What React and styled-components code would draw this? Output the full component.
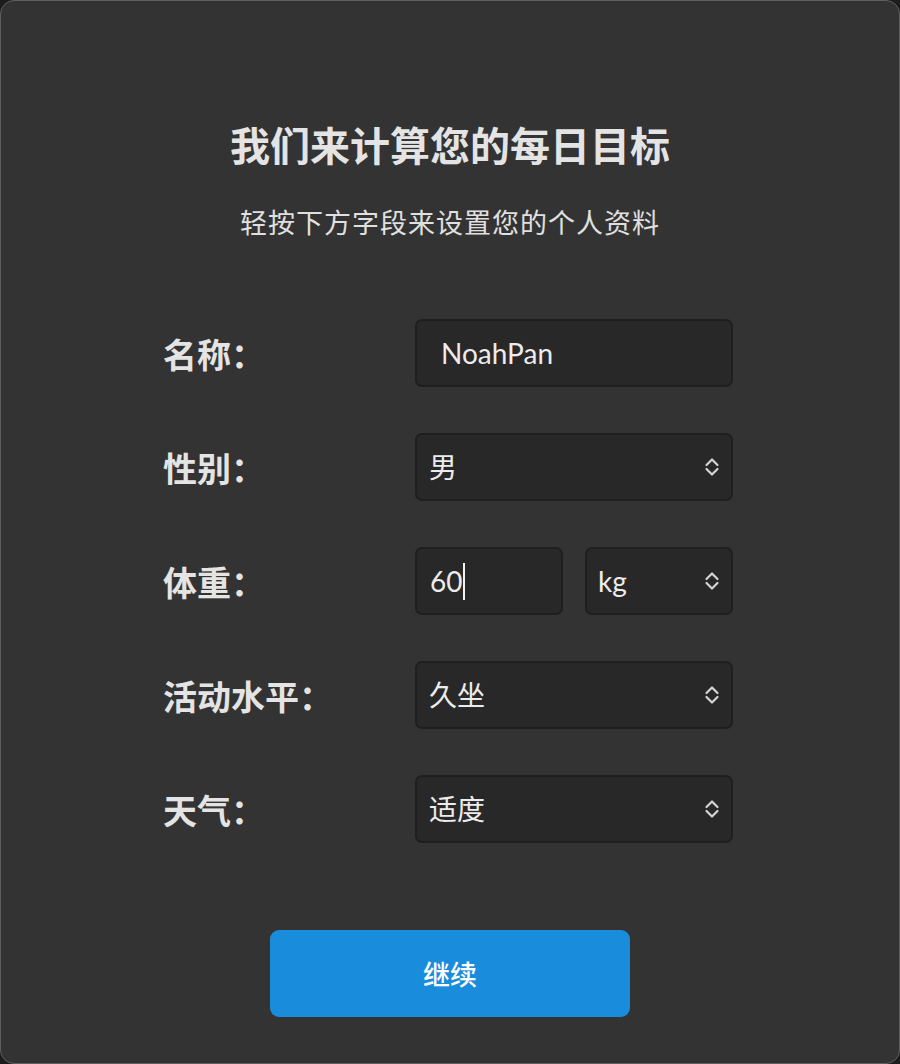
import styled, { createGlobalStyle } from "styled-components";

const GlobalStyle = createGlobalStyle`
  html, body {
    margin: 0;
    padding: 0;
    background: #1c1c1c;
  }
  * { box-sizing: border-box; }
`;

const cjk = `"Noto Sans CJK SC", sans-serif`;
const latin = `Lato, "Noto Sans CJK SC", sans-serif`;

const ChevronUpDown = () => (
    <svg width="16" height="24" viewBox="0 0 16 24" fill="none">
        <path d="M2.5 10 L8 4.5 L13.5 10" stroke="#d4d4d4" strokeWidth="2.2" strokeLinecap="round" strokeLinejoin="round" />
        <path d="M2.5 14 L8 19.5 L13.5 14" stroke="#d4d4d4" strokeWidth="2.2" strokeLinecap="round" strokeLinejoin="round" />
    </svg>
);

const fields = [
    { label: "名称：", kind: "text", value: "NoahPan" },
    { label: "性别：", kind: "select", value: "男" },
    { label: "体重：", kind: "weight", value: "60", unit: "kg" },
    { label: "活动水平：", kind: "select", value: "久坐" },
    { label: "天气：", kind: "select", value: "适度" },
];

export default function App() {
    const renderControl = (f) => {
        if (f.kind === "text") {
            return <Field $pad={24}><Value>{f.value}</Value></Field>;
        }
        if (f.kind === "weight") {
            return (
                <Split>
                    <Field $pad={13}><Value>{f.value}</Value><Caret /></Field>
                    <Field $pad={11}><Value>{f.unit}</Value><Spacer /><ChevronUpDown /></Field>
                </Split>
            );
        }
        return <Field $pad={12}><Value>{f.value}</Value><Spacer /><ChevronUpDown /></Field>;
    };

    return (
        <>
            <GlobalStyle />
            <Window>
                <Title>我们来计算您的每日目标</Title>
                <Subtitle>轻按下方字段来设置您的个人资料</Subtitle>
                <Form>
                    {fields.map((f) => (
                        <Row key={f.label}>
                            <Label>{f.label}</Label>
                            {renderControl(f)}
                        </Row>
                    ))}
                </Form>
                <ContinueButton type="button">继续</ContinueButton>
            </Window>
        </>
    );
}

const Window = styled.div`
  width: 900px;
  height: 1064px;
  background: #333333;
  border: 1px solid #5f5f5f;
  border-radius: 14px;
  display: flex;
  flex-direction: column;
  align-items: center;
  padding-top: 119px;
  overflow: hidden;
`;

const Title = styled.h1`
  margin: 0;
  font-family: ${cjk};
  font-weight: 700;
  font-size: 40px;
  line-height: 48px;
  color: #e4e4e4;
`;

const Subtitle = styled.p`
  margin: 36px 0 0;
  font-family: ${cjk};
  font-weight: 400;
  font-size: 27px;
  line-height: 36px;
  letter-spacing: 1px;
  color: #e0e0e0;
`;

const Form = styled.div`
  margin: 79px 4px 0 0;
  width: 570px;
  display: flex;
  flex-direction: column;
  gap: 46px;
`;

const Row = styled.div`
  display: grid;
  grid-template-columns: 252px 318px;
  align-items: center;
  height: 68px;
`;

const Label = styled.span`
  font-family: ${cjk};
  font-weight: 700;
  font-size: 34px;
  color: #e4e4e4;
`;

const Split = styled.div`
  display: grid;
  grid-template-columns: 148px 148px;
  gap: 22px;
  height: 68px;
`;

const Field = styled.div`
  height: 68px;
  display: flex;
  align-items: center;
  padding: 0 11px 0 ${(p) => p.$pad}px;
  background: #282828;
  border: 2px solid #1f1f1f;
  border-radius: 7px;
`;

const Value = styled.span`
  font-family: ${latin};
  font-size: 28px;
  color: #ececec;
  line-height: 1;
`;

const Caret = styled.span`
  width: 2px;
  height: 37px;
  margin-left: 1px;
  background: #f2f2f2;
`;

const Spacer = styled.span`
  flex: 1;
`;

const ContinueButton = styled.button`
  margin-top: 87px;
  width: 360px;
  height: 87px;
  border: none;
  border-radius: 9px;
  background: #1a8cdc;
  color: #ffffff;
  font-family: ${cjk};
  font-weight: 500;
  font-size: 27px;
  cursor: pointer;
`;
